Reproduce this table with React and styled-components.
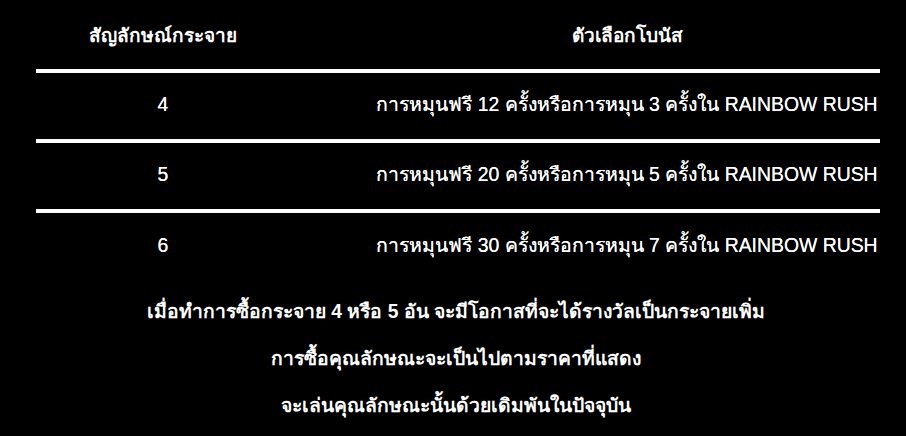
import React from "react";
import styled, { createGlobalStyle } from "styled-components";

const Global = createGlobalStyle`
  html, body { margin: 0; padding: 0; background: #000; }
  body { font-family: "Liberation Sans", Arial, sans-serif; color: #fff; }
`;

const Page = styled.div`
  width: 906px;
  height: 436px;
  background: #000;
  padding: 0 26px 0 36px;
  box-sizing: border-box;
  overflow: hidden;
`;

const Table = styled.div`
  display: flex;
  flex-direction: column;
`;

const Row = styled.div`
  display: grid;
  grid-template-columns: 254px 1fr;
  column-gap: 84px;
  align-items: center;
  height: ${(p) => p.$h}px;
  padding-bottom: ${(p) => p.$lift}px;
  border-bottom: ${(p) => (p.$line ? "4px solid #fff" : "none")};
  box-sizing: border-box;
`;

const Cell = styled.div`
  text-align: center;
  font-size: ${(p) => (p.$bold ? 19 : 19.4)}px;
  font-weight: ${(p) => (p.$bold ? 700 : 400)};
  white-space: nowrap;
  text-shadow: ${(p) => (p.$bold ? "none" : "0 0 0.4px #fff")};
`;

const Notes = styled.div`
  display: flex;
  flex-direction: column;
  align-items: center;
  gap: 26px;
  padding-top: 18px;
  margin-left: -4px;
`;

const Note = styled.p`
  margin: 0;
  font-size: 19.3px;
  font-weight: 700;
  line-height: 21px;
  white-space: nowrap;
`;

const rows = [
  ["4", "การหมุนฟรี 12 ครั้งหรือการหมุน 3 ครั้งใน RAINBOW RUSH"],
  ["5", "การหมุนฟรี 20 ครั้งหรือการหมุน 5 ครั้งใน RAINBOW RUSH"],
  ["6", "การหมุนฟรี 30 ครั้งหรือการหมุน 7 ครั้งใน RAINBOW RUSH"],
];

export default function App() {
  return (
    <>
      <Global />
      <Page>
        <Table>
          <Row $h={73} $lift={0} $line>
            <Cell $bold>สัญลักษณ์กระจาย</Cell>
            <Cell $bold>ตัวเลือกโบนัส</Cell>
          </Row>
          {rows.map(([n, t], i) => (
            <Row key={n} $h={70} $lift={i < 2 ? 4 : 6} $line={i < 2}>
              <Cell>{n}</Cell>
              <Cell>{t}</Cell>
            </Row>
          ))}
        </Table>
        <Notes>
          <Note>เมื่อทำการซื้อกระจาย 4 หรือ 5 อัน จะมีโอกาสที่จะได้รางวัลเป็นกระจายเพิ่ม</Note>
          <Note>การซื้อคุณลักษณะจะเป็นไปตามราคาที่แสดง</Note>
          <Note>จะเล่นคุณลักษณะนั้นด้วยเดิมพันในปัจจุบัน</Note>
        </Notes>
      </Page>
    </>
  );
}
